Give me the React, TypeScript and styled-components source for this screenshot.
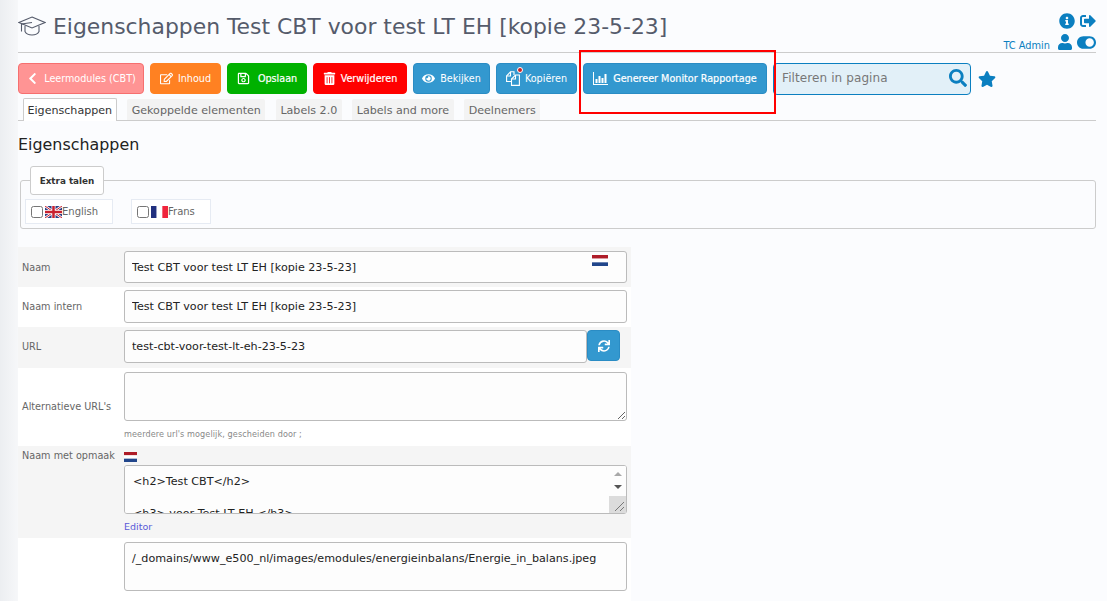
import React from 'react';
import styled, { createGlobalStyle } from 'styled-components';
import {
  FaChevronLeft, FaRegEdit, FaRegSave, FaTrashAlt, FaEye, FaSearch, FaStar,
  FaInfoCircle, FaSignOutAlt, FaUser, FaToggleOn, FaSync,
} from 'react-icons/fa';

const GlobalStyle = createGlobalStyle`
  html, body { margin: 0; padding: 0; height: 601px; overflow: hidden; background: #fbfcfe; }
  * { box-sizing: border-box; }
  body { font-family: "DejaVu Sans", Verdana, sans-serif; }
`;

const Page = styled.div`
  display: flex;
  width: 1107px;
  height: 601px;
  overflow: hidden;
  position: relative;
`;

const LeftStrip = styled.div`
  width: 18px;
  flex: none;
  background: linear-gradient(to right, #eceef1, #f6f7f9);
`;

const Main = styled.div`
  flex: 1;
  padding-right: 11px;
  min-width: 0;
`;

const Header = styled.header`
  height: 53px;
  display: flex;
  justify-content: space-between;
  border-bottom: 1px solid #ccc;
`;

const Title = styled.h1`
  margin: 12px 0 0;
  height: 28px;
  display: flex;
  align-items: center;
  gap: 7px;
  font-size: 21.9px;
  font-weight: 400;
  color: #555b6b;
  white-space: nowrap;
`;

const HeaderRight = styled.div`
  display: flex;
  flex-direction: column;
  align-items: flex-end;
  padding-top: 10px;
  color: #0b7fc0;
`;

const IconRow = styled.div`
  display: flex;
  align-items: center;
  gap: 5px;
  height: 21px;
  font-size: 16px;
`;

const LowerIconRow = styled(IconRow)`
  padding-top: 1px;
`;

const Toggle = styled(FaToggleOn)`
  font-size: 19px;
  margin-left: -1px;
`;

const UserName = styled.span`
  font-size: 9.8px;
  margin-right: 2px;
  padding-top: 6px;
`;

const Toolbar = styled.div`
  display: flex;
  align-items: center;
  gap: 6px;
  margin-top: 10px;
  height: 31px;
`;

const ActionButton = styled.button<{ $bg: string; $border?: string; $width: number; $strong?: boolean }>`
  width: ${p => p.$width}px;
  height: 31px;
  flex: none;
  display: flex;
  align-items: center;
  justify-content: center;
  gap: 5px;
  padding: 0;
  border: 1px solid ${p => p.$border || p.$bg};
  border-radius: 4px;
  background: ${p => p.$bg};
  color: #fff;
  font-family: "DejaVu Sans Condensed", "DejaVu Sans", sans-serif;
  font-stretch: condensed;
  font-size: 10.7px;
  font-weight: 400;
  white-space: nowrap;
  -webkit-text-stroke: ${p => (p.$strong ? '0.2px #fff' : '0')};
  svg { font-size: 13px; flex: none; }
`;

const Badge = styled.span`
  position: relative;
  display: inline-flex;
  &::after {
    content: '';
    position: absolute;
    right: -3px;
    top: -4px;
    width: 4px;
    height: 4px;
    border-radius: 50%;
    background: #c22;
    border: 1px solid #fff;
    box-sizing: content-box;
  }
`;

const SearchBox = styled.div`
  width: 198px;
  height: 32px;
  display: flex;
  align-items: center;
  justify-content: space-between;
  padding: 0 3px 2px 8px;
  border: 1px solid #0b7fc0;
  border-radius: 4px;
  background: #e2f0f8;
  font-size: 12px;
  letter-spacing: 0.1px;
  color: #777;
  svg { font-size: 18px; color: #0b7fc0; }
`;

const FavStar = styled(FaStar)`
  font-size: 18px;
  color: #0b7fc0;
  margin-left: 1px;
`;

const Tabs = styled.nav`
  display: flex;
  gap: 10.5px;
  margin-top: 4px;
  padding-left: 5px;
  height: 23px;
  border-bottom: 1px solid #ccc;
`;

const Tab = styled.div<{ $active?: boolean }>`
  height: ${p => (p.$active ? 23 : 21)}px;
  margin-top: ${p => (p.$active ? 0 : 1)}px;
  padding: 1px ${p => (p.$active ? 3.5 : 4.5)}px 0;
  display: flex;
  align-items: center;
  font-size: 11.1px;
  color: ${p => (p.$active ? '#333' : '#666')};
  background: ${p => (p.$active ? '#fff' : '#f3f3f3')};
  border: ${p => (p.$active ? '1px solid #ccc' : 'none')};
  border-bottom: none;
  border-radius: 2px 2px 0 0;
`;

const Heading = styled.h2`
  margin: 14px 0 0;
  height: 20px;
  line-height: 20px;
  font-size: 15.9px;
  font-weight: 400;
  color: #222;
`;

const FieldSet = styled.fieldset`
  margin: 11px 0 0 2px;
  padding: 0 4px;
  height: 63px;
  border: 1px solid #ccc;
  border-radius: 3px;
`;

const Legend = styled.legend`
  margin-left: 5px;
  padding: 0;
  width: 74px;
  height: 29px;
  display: flex;
  align-items: center;
  justify-content: center;
  background: #fff;
  border: 1px solid #ccc;
  border-radius: 3px;
  font-size: 8.8px;
  font-weight: 700;
  color: #333;
`;

const LangRow = styled.div`
  display: flex;
  gap: 18px;
  margin-top: 4px;
`;

const LangCell = styled.label<{ $width: number }>`
  width: ${p => p.$width}px;
  height: 25px;
  display: flex;
  align-items: center;
  padding-left: 5px;
  background: #fff;
  border: 1px solid #e6ebf3;
  font-size: 10px;
  color: #666;
  input { margin: 0 2px 0 0; width: 12px; height: 12px; }
`;

const Form = styled.div`
  margin-top: 18px;
  width: 613px;
`;

const Row = styled.div<{ $shade?: boolean; $height: number; $align?: string; $pb?: number }>`
  height: ${p => p.$height}px;
  padding-bottom: ${p => p.$pb || 0}px;
  display: flex;
  align-items: ${p => p.$align || 'center'};
  background: ${p => (p.$shade ? '#f5f5f5' : '#fff')};
`;

const Label = styled.div<{ $top?: number }>`
  width: 106px;
  flex: none;
  margin-top: ${p => p.$top || 0}px;
  padding-left: 4px;
  font-size: 9.7px;
  color: #666;
  white-space: nowrap;
`;

const Control = styled.div<{ $top?: number }>`
  flex: 1;
  min-width: 0;
  padding-top: ${p => p.$top || 0}px;
  padding-right: 4px;
  display: flex;
  flex-direction: column;
`;

const TextInput = styled.input<{ $height?: number }>`
  width: 100%;
  height: ${p => p.$height || 33}px;
  padding: 0 7px;
  border: 1px solid #bbb;
  border-radius: 3px;
  background: #fdfdfd;
  font-family: "DejaVu Sans", Verdana, sans-serif;
  font-size: 11.15px;
  color: #222;
  outline: none;
`;

const InputWrap = styled.div`
  position: relative;
  display: flex;
`;

const UrlGroup = styled(InputWrap)`
  padding-right: 7px;
`;

const OverFlag = styled.span`
  position: absolute;
  top: 4px;
  right: 19px;
  display: flex;
`;

const TextBlock = styled.textarea<{ $height: number; $fixed?: boolean }>`
  width: 100%;
  height: ${p => p.$height}px;
  padding: 8px ${p => (p.$fixed ? '7px' : '8px')};
  border: 1px solid #bbb;
  border-radius: 3px;
  background: #fdfdfd;
  font-family: "DejaVu Sans", Verdana, sans-serif;
  font-size: 11.15px;
  line-height: 16px;
  color: #222;
  outline: none;
  display: block;
  resize: ${p => (p.$fixed ? 'none' : 'both')};
`;

// headless chrome hides real scrollbars, so the one on the markup field is drawn over it
const ScrollRail = styled.div`
  position: absolute;
  top: 1px;
  right: 1px;
  bottom: 1px;
  width: 17px;
  display: flex;
  flex-direction: column;
  align-items: center;
  background: #fdfdfd;
  border-radius: 0 2px 2px 0;
  pointer-events: none;
`;

const ScrollArrow = styled.span<{ $down?: boolean }>`
  width: 0;
  height: 0;
  margin-top: ${p => (p.$down ? 9 : 6)}px;
  border-left: 4px solid transparent;
  border-right: 4px solid transparent;
  border-bottom: ${p => (p.$down ? '0' : '4px solid #a8a8a8')};
  border-top: ${p => (p.$down ? '4px solid #555' : '0')};
`;

const ScrollCorner = styled.span`
  margin-top: auto;
  width: 17px;
  height: 17px;
  background: #dcdcdc;
  display: flex;
`;

const RefreshButton = styled.button`
  width: 33px;
  height: 31px;
  flex: none;
  display: flex;
  align-items: center;
  justify-content: center;
  padding: 0;
  background: #3398cf;
  border: 1px solid #2a8cc4;
  border-radius: 4px;
  color: #fff;
  font-size: 12px;
`;

const Hint = styled.div`
  margin-top: 8px;
  font-size: 8.1px;
  letter-spacing: 0.1px;
  color: #888;
`;

const EditorLink = styled.a`
  margin-top: 7px;
  font-size: 9.5px;
  color: #5a5ad8;
`;

const FlagLine = styled.div`
  display: flex;
  align-items: flex-start;
  height: 19px;
  padding-top: 6px;
`;

const Annotation = styled.div`
  position: absolute;
  left: 579px;
  top: 50px;
  width: 197px;
  height: 64px;
  border: 2px solid #f00;
  pointer-events: none;
`;

const CapIcon = () => (
  <svg width={28} height={20} viewBox="0 0 28 20" fill="none" stroke="#555b6b" strokeWidth={1.1}>
    <path d="M14 1L27 6.5L14 12L1 6.5Z" />
    <path d="M7 10V15.5C8 17.5 11 19 14 19C17 19 20 17.5 21 15.5V10" />
    <path d="M3.5 8V15.5M14 6.5L3.5 8" />
  </svg>
);

const ChartIcon = () => (
  <svg width={15} height={13} viewBox="0 0 15 13" fill="#fff">
    <rect x={0} y={0} width={1} height={13} />
    <rect x={0} y={12} width={15} height={1} />
    <rect x={2.5} y={7} width={2} height={4} />
    <rect x={5.5} y={4} width={2} height={7} />
    <rect x={8.5} y={6} width={2} height={5} />
    <rect x={11.5} y={2} width={2} height={9} />
  </svg>
);

const FilesIcon = () => (
  <svg width={14} height={15} viewBox="0 0 14 15" fill="none" stroke="#fff" strokeWidth={1.1}>
    <path d="M5.5 10.5H0.6V5L4.5 0.8H8V4" />
    <path d="M4.5 1V5H0.6" />
    <path d="M5.5 14.4V8L9.5 4H13.4V14.4Z" />
    <path d="M9.5 4V8H5.5" />
  </svg>
);

const GripIcon = () => (
  <svg width={17} height={17} viewBox="0 0 17 17" stroke="#777" strokeWidth={1} fill="none">
    <path d="M6 15L15 6M11 15L15 11" />
  </svg>
);

const Flag = ({ colors, vertical, w = 20, h = 12 }: { colors: string[]; vertical?: boolean; w?: number; h?: number }) => (
  <svg width={w} height={h} viewBox="0 0 30 18" preserveAspectRatio="none">
    {colors.map((c, i) =>
      vertical ? (
        <rect key={i} x={i * 10} y={0} width={10} height={18} fill={c} />
      ) : (
        <rect key={i} x={0} y={i * 6} width={30} height={6} fill={c} />
      )
    )}
  </svg>
);

const UkFlag = () => (
  <svg width={17} height={12} viewBox="0 0 34 24">
    <rect width={34} height={24} fill="#2b3f86" />
    <path d="M0 0L34 24M34 0L0 24" stroke="#fff" strokeWidth={5} />
    <path d="M0 0L34 24M34 0L0 24" stroke="#c8202f" strokeWidth={2} />
    <path d="M17 0V24M0 12H34" stroke="#fff" strokeWidth={8} />
    <path d="M17 0V24M0 12H34" stroke="#c8202f" strokeWidth={5} />
  </svg>
);

const NL = ['#ae1c28', '#ffffff', '#21468b'];
const BLUE = '#3398cf';
const BLUE_EDGE = '#2a8cc4';

export default function App() {
  return (
    <Page>
      <GlobalStyle />
      <LeftStrip />
      <Main>
        <Header>
          <Title>
            <CapIcon />
            Eigenschappen Test CBT voor test LT EH [kopie 23-5-23]
          </Title>
          <HeaderRight>
            <IconRow>
              <FaInfoCircle />
              <FaSignOutAlt />
            </IconRow>
            <LowerIconRow>
              <UserName>TC Admin</UserName>
              <FaUser />
              <Toggle />
            </LowerIconRow>
          </HeaderRight>
        </Header>

        <Toolbar>
          <ActionButton $bg="#ff9494" $border="#f66f6f" $width={126}><FaChevronLeft />Leermodules (CBT)</ActionButton>
          <ActionButton $bg="#ff8122" $width={71}><FaRegEdit />Inhoud</ActionButton>
          <ActionButton $bg="#00b100" $width={80} $strong><FaRegSave />&nbsp;Opslaan</ActionButton>
          <ActionButton $bg="#ff0000" $width={94} $strong><FaTrashAlt />Verwijderen</ActionButton>
          <ActionButton $bg={BLUE} $border={BLUE_EDGE} $width={77}><FaEye />Bekijken</ActionButton>
          <ActionButton $bg={BLUE} $border={BLUE_EDGE} $width={81}><Badge><FilesIcon /></Badge>Kopiëren</ActionButton>
          <ActionButton $bg={BLUE} $border={BLUE_EDGE} $width={184} $strong><ChartIcon />Genereer Monitor Rapportage</ActionButton>
          <SearchBox>Filteren in pagina<FaSearch /></SearchBox>
          <FavStar />
        </Toolbar>

        <Tabs>
          <Tab $active>Eigenschappen</Tab>
          <Tab>Gekoppelde elementen</Tab>
          <Tab>Labels 2.0</Tab>
          <Tab>Labels and more</Tab>
          <Tab>Deelnemers</Tab>
        </Tabs>

        <Heading>Eigenschappen</Heading>

        <FieldSet>
          <Legend>Extra talen</Legend>
          <LangRow>
            <LangCell $width={88}><input type="checkbox" /><UkFlag />English</LangCell>
            <LangCell $width={80}><input type="checkbox" /><Flag colors={['#21307f', '#ffffff', '#f0243c']} vertical w={17} />Frans</LangCell>
          </LangRow>
        </FieldSet>

        <Form>
          <Row $shade $height={40}>
            <Label>Naam</Label>
            <Control>
              <InputWrap>
                <TextInput $height={32} readOnly value="Test CBT voor test LT EH [kopie 23-5-23]" />
                <OverFlag><Flag colors={NL} w={16} h={11} /></OverFlag>
              </InputWrap>
            </Control>
          </Row>
          <Row $height={40} $pb={1}>
            <Label>Naam intern</Label>
            <Control><TextInput readOnly value="Test CBT voor test LT EH [kopie 23-5-23]" /></Control>
          </Row>
          <Row $shade $height={41} $pb={2}>
            <Label>URL</Label>
            <Control>
              <UrlGroup>
                <TextInput readOnly value="test-cbt-voor-test-lt-eh-23-5-23" />
                <RefreshButton><FaSync /></RefreshButton>
              </UrlGroup>
            </Control>
          </Row>
          <Row $height={78} $align="flex-start">
            <Label $top={33}>Alternatieve URL's</Label>
            <Control $top={4}>
              <TextBlock readOnly $height={49} value="" />
              <Hint>meerdere url's mogelijk, gescheiden door ;</Hint>
            </Control>
          </Row>
          <Row $shade $height={92} $align="flex-start">
            <Label $top={4}>Naam met opmaak</Label>
            <Control>
              <FlagLine><Flag colors={NL} w={13} h={10} /></FlagLine>
              <InputWrap>
                <TextBlock readOnly $height={49} value={'<h2>Test CBT</h2>\n\n<h3> voor Test LT EH </h3>\n\nmeer tekst\n\nmeer tekst'} />
                <ScrollRail>
                  <ScrollArrow />
                  <ScrollArrow $down />
                  <ScrollCorner><GripIcon /></ScrollCorner>
                </ScrollRail>
              </InputWrap>
              <EditorLink>Editor</EditorLink>
            </Control>
          </Row>
          <Row $height={63} $align="flex-start">
            <Label />
            <Control $top={4}>
              <TextBlock readOnly $fixed $height={49} value="/_domains/www_e500_nl/images/emodules/energieinbalans/Energie_in_balans.jpeg" />
            </Control>
          </Row>
        </Form>
      </Main>
      <Annotation />
    </Page>
  );
}
